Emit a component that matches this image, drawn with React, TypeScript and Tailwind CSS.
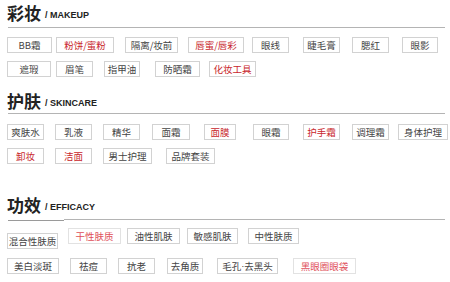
import React from "react";

type Tag = { label: React.ReactNode; key: string; cls: string; tone?: "red" | "pink" };

const t = (label: string, cls: string, tone?: "red" | "pink"): Tag => ({ label, key: label, cls, tone });

const makeupRows: Tag[][] = [
  [
    t("BB霜", "w-[45px]"),
    t("粉饼/蜜粉", "ml-[4px] w-[58px]", "red"),
    t("隔离/妆前", "ml-[11px] w-[53px]"),
    t("唇蜜/唇彩", "ml-[10px] w-[56px]", "red"),
    t("眼线", "ml-[8px] w-[37px]"),
    t("睫毛膏", "ml-[14px] w-[37px]"),
    t("腮红", "ml-[12px] w-[37px]"),
    t("眼影", "ml-[13px] w-[36px]"),
  ],
  [
    t("遮瑕", "w-[44px]"),
    t("眉笔", "ml-[5px] w-[37px]"),
    t("指甲油", "ml-[11px] w-[36px]"),
    t("防晒霜", "ml-[15px] w-[45px]"),
    t("化妆工具", "ml-[9px] w-[47px]", "red"),
  ],
];

const skincareRows: Tag[][] = [
  [
    t("爽肤水", "w-[37px]"),
    t("乳液", "ml-[11px] w-[37px]"),
    t("精华", "ml-[11px] w-[37px]"),
    t("面霜", "ml-[12px] w-[38px]"),
    t("面膜", "ml-[14px] w-[32px]", "red"),
    t("眼霜", "ml-[17px] w-[36px]"),
    t("护手霜", "ml-[14px] w-[37px]", "red"),
    t("调理霜", "ml-[12px] w-[37px]"),
    t("身体护理", "ml-[9px] w-[50px]"),
  ],
  [
    t("卸妆", "w-[37px]", "red"),
    t("洁面", "ml-[11px] w-[37px]", "red"),
    t("男士护理", "ml-[11px] w-[49px]"),
    t("品牌套装", "ml-[14px] w-[49px]"),
  ],
];

const efficacyRows: Tag[][] = [
  [
    t("混合性肤质", "mt-[5px] w-[51px]"),
    t("干性肤质", "ml-[10px] w-[53px]", "pink"),
    t("油性肌肤", "ml-[6px] w-[53px]"),
    t("敏感肌肤", "ml-[7px] w-[51px]"),
    t("中性肤质", "ml-[10px] w-[51px]"),
  ],
  [
    t("美白淡斑", "w-[52px]"),
    t("祛痘", "ml-[11px] w-[37px]"),
    t("抗老", "ml-[11px] w-[37px]"),
    t("去角质", "ml-[12px] w-[36px]"),
    {
      key: "毛孔去黑头",
      cls: "ml-[14px] w-[61px]",
      label: (
        <>
          毛孔<span className="[font-family:'Liberation_Sans',sans-serif]">·</span>去黑头
        </>
      ),
    },
    t("黑眼圈眼袋", "ml-[15px] w-[63px]", "pink"),
  ],
];

function TagBox({ tag }: { tag: Tag }) {
  const tone =
    tag.tone === "red"
      ? "text-[#c8262c] border-[#d2d2d2]"
      : tag.tone === "pink"
        ? "text-[#e0505a] border-[#e2e2e2]"
        : "text-[#444] border-[#d2d2d2]";
  return (
    <div
      className={`flex h-[16px] shrink-0 items-center justify-center whitespace-nowrap border bg-white text-[9.5px] leading-[14px] ${tone} ${tag.cls}`}
    >
      {tag.label}
    </div>
  );
}

function Heading({ cn, en }: { cn: string; en: string }) {
  return (
    <div className="flex h-[20px] items-end">
      <span className="text-[17px] font-bold leading-[20px] text-[#222]">{cn}</span>
      <span className="mb-[2px] ml-[4px] text-[9px] font-bold leading-[12px] text-[#222] [font-family:'Liberation_Sans',sans-serif]">
        {en}
      </span>
    </div>
  );
}

function Rows({ rows, gap }: { rows: Tag[][]; gap: string }) {
  return (
    <div className={`flex flex-col ${gap}`}>
      {rows.map((row, i) => (
        <div key={i} className="flex items-start">
          {row.map((tag) => (
            <TagBox key={tag.key} tag={tag} />
          ))}
        </div>
      ))}
    </div>
  );
}

export default function App() {
  return (
    <div className="h-[282px] w-[450px] overflow-hidden bg-white pl-[7px] [font-family:'Noto_Sans_CJK_SC','Noto_Sans',sans-serif]">
      {/* 彩妆 */}
      <div className="pt-[3px]">
        <Heading cn="彩妆" en="/ MAKEUP" />
        <div className="ml-[1px] mt-[4px] h-px w-[437px] bg-[#b4b4b4]" />
        <div className="mt-[9px]">
          <Rows rows={makeupRows} gap="gap-[8px]" />
        </div>
      </div>

      {/* 护肤 */}
      <div className="mt-[14px]">
        <Heading cn="护肤" en="/ SKINCARE" />
        <div className="ml-[1px] mt-[2px] h-px w-[437px] bg-[#b4b4b4]" />
        <div className="mt-[10px]">
          <Rows rows={skincareRows} gap="gap-[8px]" />
        </div>
      </div>

      {/* 功效 */}
      <div className="mt-[31px]">
        <Heading cn="功效" en="/ EFFICACY" />
        <div className="ml-[1px] mt-[4px] flex w-[437px]">
          <div className="mt-[1px] h-px w-[56px] bg-[#9a9a9a]" />
          <div className="h-px flex-1 bg-[#b4b4b4]" />
        </div>
        <div className="mt-[7px]">
          <Rows rows={efficacyRows} gap="gap-[9px]" />
        </div>
      </div>
    </div>
  );
}
